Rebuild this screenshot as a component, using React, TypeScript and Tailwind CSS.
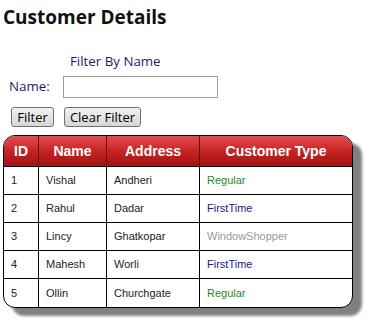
import React from 'react'

type Customer = { id: number; name: string; address: string; type: 'Regular' | 'FirstTime' | 'WindowShopper' }

const CUSTOMERS: Customer[] = [
  { id: 1, name: 'Vishal', address: 'Andheri',   type: 'Regular' },
  { id: 2, name: 'Rahul',  address: 'Dadar',     type: 'FirstTime' },
  { id: 3, name: 'Lincy',  address: 'Ghatkopar', type: 'WindowShopper' },
  { id: 4, name: 'Mahesh', address: 'Worli',     type: 'FirstTime' },
  { id: 5, name: 'Ollin',  address: 'Churchgate', type: 'Regular' },
]

// 고객 유형별 글자색
const TYPE_COLOR: Record<Customer['type'], string> = {
  Regular:       'text-[#1f8a1f]',
  FirstTime:     'text-[#1a1a86]',
  WindowShopper: 'text-[#9a9a9a]',
}

const HEADERS = ['ID', 'Name', 'Address', 'Customer Type']

function Button({ children, className = '' }: { children: React.ReactNode; className?: string }) {
  return (
    <button
      className={`h-[20px] whitespace-nowrap rounded-[3px] border border-[#707070] bg-gradient-to-b from-[#f2f2f2] to-[#d6d6d6] px-0 text-[13px] leading-none text-black ${className}`}
    >
      {children}
    </button>
  )
}

export default function App() {
  return (
    <div className="h-[327px] w-[372px] bg-white font-['Open_Sans','Noto_Sans',sans-serif]">
      {/* 제목 */}
      <h1 className="pl-[3px] pt-[5px] text-[19px] font-bold leading-[24px] text-[#111]">Customer Details</h1>

      {/* 필터 영역 */}
      <div className="mt-[23px] pl-[70px] text-[13.3px] leading-[18px] text-[#1c1c6a]">Filter By Name</div>
      <div className="mt-[6px] flex items-center">
        <span className="pl-[9px] text-[13.3px] text-[#1c1c6a]">Name:</span>
        <input className="ml-[13px] h-[22px] w-[155px] border border-[#a0a0a0] bg-white" />
      </div>
      <div className="mt-[9px] flex gap-[10px] pl-[11px]">
        <Button className="w-[43px]">Filter</Button>
        <Button className="w-[77px]">Clear Filter</Button>
      </div>

      {/* 고객 테이블 */}
      <div className="ml-[3px] mt-[8px] w-[350px] overflow-hidden rounded-[12px] border border-black bg-white font-['Liberation_Sans',Arial,sans-serif] shadow-[9px_8px_3px_#808080]">
        <div className="grid grid-cols-[35px_68px_93px_1fr] bg-gradient-to-b from-[#e04c4c] via-[#c62222] to-[#9c1414]">
          {HEADERS.map((h, i) => (
            <div
              key={h}
              className={`flex h-[31px] items-center justify-center border-b border-black text-[14px] font-bold text-white ${
                i < HEADERS.length - 1 ? 'border-r border-r-[#6a0a0a]' : ''
              }`}
            >
              {h}
            </div>
          ))}
        </div>
        {CUSTOMERS.map((c, r) => {
          const last = r === CUSTOMERS.length - 1
          const cell = `flex h-[28px] items-center pl-[7px] text-[11px] ${last ? '' : 'border-b border-black'}`
          return (
            <div key={c.id} className="grid grid-cols-[35px_68px_93px_1fr] text-[#222]">
              <div className={`${cell} border-r border-black`}>{c.id}</div>
              <div className={`${cell} border-r border-black`}>{c.name}</div>
              <div className={`${cell} border-r border-black`}>{c.address}</div>
              <div className={`${cell} ${TYPE_COLOR[c.type]}`}>{c.type}</div>
            </div>
          )
        })}
      </div>
    </div>
  )
}
